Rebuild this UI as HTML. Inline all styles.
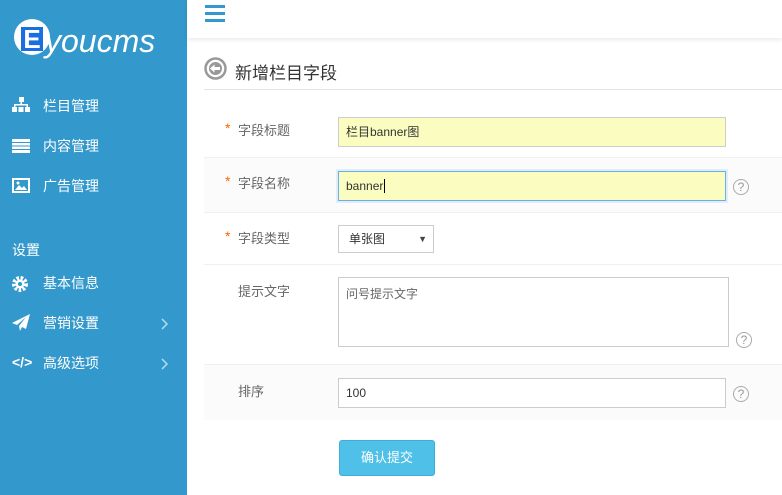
<!DOCTYPE html>
<html><head><meta charset="utf-8"><style>
*{box-sizing:border-box;margin:0;padding:0}
body{width:782px;height:495px;overflow:hidden;background:#fff;font-family:"Liberation Sans","Noto Sans CJK SC",sans-serif;font-size:13px;color:#333;position:relative}
.side{position:absolute;left:0;top:0;width:187px;height:495px;background:#3398cc;color:#fff}
.abs{position:absolute}
.nav{position:absolute;left:43px;font-size:14px;color:#fff}
.ic{position:absolute;left:12px}
.hdr{position:absolute;left:187px;top:0;right:0;height:38px;background:#fff;box-shadow:0 2px 4px rgba(0,0,0,.08)}
.row{position:absolute;left:204px;right:0;border-bottom:1px solid #f0f0f0}
.lbl{position:absolute;left:238px;font-size:13px;color:#666}
.star{position:absolute;left:225px;color:#f60;font-size:14px}
.inp{position:absolute;left:338px;border:1px solid #ccc;background:#fff;padding-left:7px;font-size:12px;color:#333}
.q{position:absolute;width:16px;height:16px;border:1.3px solid #aaa;border-radius:50%;color:#999;font-size:12px;text-align:center;line-height:14px}
</style></head><body>
<div class="side">
 <div class="abs" style="left:14px;top:19px;width:36px;height:36px;border-radius:50%;background:#fff"></div>
 <div class="abs" style="left:21px;top:27px;width:22px;height:24px;background:#1a6fe0;color:#fff;font:bold 26px/24px 'Liberation Sans',sans-serif;text-align:center;">E</div>
 <div class="abs" style="left:45px;top:24px;font:italic 32px/34px 'Liberation Sans',sans-serif;color:#fff">youcms</div>
 <svg class="ic" style="top:97px" width="18" height="16" viewBox="0 0 18 16" fill="#fff"><rect x="7" y="0" width="5" height="5"/><rect x="8.5" y="5" width="1.5" height="3"/><rect x="2" y="7" width="14" height="1.5"/><rect x="2" y="7" width="1.5" height="4"/><rect x="14.5" y="7" width="1.5" height="4"/><rect x="0" y="10" width="5" height="5"/><rect x="6.5" y="10" width="5" height="5"/><rect x="13" y="10" width="5" height="5"/></svg>
 <div class="nav" style="top:96px">栏目管理</div>
 <svg class="ic" style="top:139px" width="18" height="14" viewBox="0 0 18 14" fill="#fff"><rect y="0" width="18" height="3"/><rect y="4" width="18" height="2.5"/><rect y="7.5" width="18" height="2.5"/><rect y="11" width="18" height="3"/></svg>
 <div class="nav" style="top:136px">内容管理</div>
 <svg class="ic" style="top:178px" width="18" height="15" viewBox="0 0 18 15"><rect x="1" y="1" width="16" height="13" fill="none" stroke="#fff" stroke-width="2"/><path d="M3 12 L7 7 L10 10 L12 8 L15 12Z" fill="#fff"/><circle cx="6" cy="5" r="1.5" fill="#fff"/></svg>
 <div class="nav" style="top:176px">广告管理</div>
 <div class="abs" style="left:12px;top:240px;font-size:14px;color:#fff">设置</div>
 <svg class="ic" style="top:276px" width="16" height="16" viewBox="0 0 16 16"><circle cx="8" cy="8" r="6" fill="none" stroke="#fff" stroke-width="4" stroke-dasharray="2.5 1.6"/><circle cx="8" cy="8" r="4.5" fill="#fff"/><circle cx="8" cy="8" r="2" fill="#3398cc"/></svg>
 <div class="nav" style="top:273px">基本信息</div>
 <svg class="ic" style="top:314px" width="18" height="17" viewBox="0 0 18 17" fill="#fff"><path d="M18 0 L0 9 L5 11 L14 3 L7 12 L8 17 L10 13 L14 15Z"/></svg>
 <div class="nav" style="top:313px">营销设置</div>
 <svg class="abs" style="left:161px;top:318px" width="7" height="12" viewBox="0 0 7 12"><path d="M1 1 L6 6 L1 11" fill="none" stroke="#b9dcef" stroke-width="1.5"/></svg>
 <div class="abs" style="left:12px;top:354px;font-size:14px;font-weight:bold;color:#fff">&lt;/&gt;</div>
 <div class="nav" style="top:353px">高级选项</div>
 <svg class="abs" style="left:161px;top:358px" width="7" height="12" viewBox="0 0 7 12"><path d="M1 1 L6 6 L1 11" fill="none" stroke="#b9dcef" stroke-width="1.5"/></svg>
</div>
<div class="hdr">
 <div class="abs" style="left:18px;top:5px;width:20px;height:3px;background:#3398cc"></div>
 <div class="abs" style="left:18px;top:12px;width:20px;height:3px;background:#3398cc"></div>
 <div class="abs" style="left:18px;top:19px;width:20px;height:3px;background:#3398cc"></div>
</div>
<svg class="abs" style="left:204px;top:57px" width="23" height="23" viewBox="0 0 23 23"><circle cx="11.5" cy="11.5" r="10" fill="none" stroke="#999" stroke-width="2.5"/><circle cx="11.5" cy="11.5" r="6.5" fill="#999"/><path d="M6 11.5 L10.5 7.5 V10 H16 V13 H10.5 V15.5Z" fill="#fff"/></svg>
<div class="abs" style="left:235px;top:59px;font-size:17px;color:#333">新增栏目字段</div>
<div class="abs" style="left:204px;top:89px;right:0;height:1px;background:#e4e4e4"></div>
<div class="row" style="top:102px;height:56px;background:#fff"></div>
<div class="row" style="top:158px;height:55px;background:#fbfbfb"></div>
<div class="row" style="top:213px;height:52px;background:#fff"></div>
<div class="row" style="top:265px;height:100px;background:#fff"></div>
<div class="row" style="top:365px;height:55px;background:#fbfbfb;border:none"></div>
<div class="star" style="top:120px">*</div><div class="lbl" style="top:120px">字段标题</div>
<div class="inp" style="top:117px;width:388px;height:30px;background:#fafdbf;line-height:28px">栏目banner图</div>
<div class="star" style="top:173px">*</div><div class="lbl" style="top:173px">字段名称</div>
<div class="inp" style="top:171px;width:388px;height:30px;background:#fafdbf;line-height:28px;border-color:#66afe9;box-shadow:0 0 0 2px #e1eef9">banner<span style="border-left:1px solid #000;margin-left:1px"></span></div>
<div class="q" style="left:733px;top:179px">?</div>
<div class="star" style="top:228px">*</div><div class="lbl" style="top:228px">字段类型</div>
<div class="inp" style="top:225px;width:96px;height:28px;line-height:26px;padding-left:10px">单张图<span style="position:absolute;right:6px;font-size:9px;color:#444">▼</span></div>
<div class="lbl" style="top:281px">提示文字</div>
<div class="inp" style="top:277px;width:391px;height:70px;padding-top:7px;color:#666">问号提示文字</div>
<div class="q" style="left:736px;top:332px">?</div>
<div class="lbl" style="top:381px">排序</div>
<div class="inp" style="top:378px;width:388px;height:30px;line-height:28px">100</div>
<div class="q" style="left:733px;top:386px">?</div>
<div class="abs" style="left:339px;top:440px;width:96px;height:36px;background:#4fc0e8;border:1px solid #3bafda;border-radius:3px;color:#fff;font-size:13px;text-align:center;line-height:34px">确认提交</div>
</body></html>
